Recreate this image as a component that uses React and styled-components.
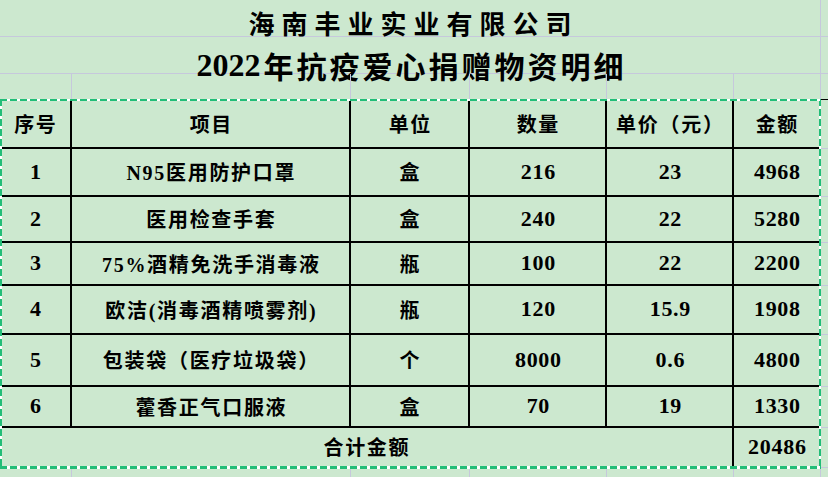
import React from 'react';
import styled, { createGlobalStyle } from 'styled-components';

const COLS = '72px 279px 119px 137px 127px 87px 1fr';
const GRID = '#c6c8dc';
const DASH = '#22bd77';

const GlobalStyle = createGlobalStyle`
  html, body {
    margin: 0;
    padding: 0;
    background: #cce8cf;
  }
  body {
    font-family: "Liberation Serif", "Noto Sans CJK SC", serif;
    color: #000;
  }
`;

const Sheet = styled.div`
  width: 828px;
  height: 477px;
  overflow: hidden;
  background: #cce8cf;
  display: flex;
  flex-direction: column;
`;

const TitleRow = styled.div`
  display: grid;
  grid-template-columns: 821px 1fr;
  height: ${({ h }) => h}px;
  box-sizing: border-box;
  border-bottom: 1px solid ${GRID};
`;

const TitleCell = styled.div`
  display: flex;
  align-items: center;
  justify-content: center;
  padding-top: ${({ pt }) => pt}px;
  padding-left: ${({ ls }) => ls}px;
  font-size: ${({ size }) => size}px;
  letter-spacing: ${({ ls }) => ls}px;
  font-weight: 700;
  border-right: 1px solid ${GRID};
  white-space: nowrap;
`;

const Year = styled.span`
  font-size: 32px;
  letter-spacing: 0;
  margin-right: 3px;
`;

const GridRow = styled.div`
  display: grid;
  grid-template-columns: ${COLS};
  height: ${({ h }) => h}px;
`;

const GridCell = styled.div`
  border-right: 1px solid ${GRID};
  &:last-child {
    border-right: none;
  }
`;

const Table = styled.div`
  position: relative;
  border-top: 1px solid #000;
  width: 828px;

  &::after {
    content: '';
    position: absolute;
    left: 0;
    top: -1px;
    width: 821px;
    bottom: -1px;
    pointer-events: none;
    background:
      repeating-linear-gradient(90deg, ${DASH} 0 7px, #fff 7px 10px) left top / 100% 2px no-repeat,
      repeating-linear-gradient(90deg, ${DASH} 0 7px, #fff 7px 10px) left bottom / 100% 3px no-repeat,
      repeating-linear-gradient(180deg, ${DASH} 0 7px, #fff 7px 10px) left top / 2px 100% no-repeat,
      repeating-linear-gradient(180deg, ${DASH} 0 7px, #fff 7px 10px) right top / 2px 100% no-repeat;
  }
`;

const Row = styled.div`
  display: grid;
  grid-template-columns: ${({ total }) => (total ? '734px 87px 1fr' : COLS)};
  height: ${({ h }) => h}px;
`;

const Cell = styled.div`
  display: flex;
  align-items: center;
  justify-content: center;
  box-sizing: border-box;
  border-right: 2px solid #000;
  border-bottom: 2px solid #000;
  font-size: ${({ num }) => (num ? '22px' : '20px')};
  font-weight: 700;
  letter-spacing: ${({ num }) => (num ? '0.7px' : '1.7px')};
  padding-left: 1.7px;
  white-space: nowrap;
`;

const Gutter = styled.div`
  border-bottom: 1px solid ${GRID};
`;

const header = ['序号', '项目', '单位', '数量', '单价（元）', '金额'];

const rows = [
  { h: 48, cells: ['1', 'N95医用防护口罩', '盒', '216', '23', '4968'] },
  { h: 46, cells: ['2', '医用检查手套', '盒', '240', '22', '5280'] },
  { h: 43, cells: ['3', '75%酒精免洗手消毒液', '瓶', '100', '22', '2200'] },
  { h: 49, cells: ['4', '欧洁(消毒酒精喷雾剂)', '瓶', '120', '15.9', '1908'] },
  { h: 52, cells: ['5', '包装袋（医疗垃圾袋）', '个', '8000', '0.6', '4800'] },
  { h: 41, cells: ['6', '藿香正气口服液', '盒', '70', '19', '1330'] },
];

const isNum = (t) => /^[\d.]+$/.test(t);

const App = () => {
  return (
    <Sheet>
      <GlobalStyle />
      <TitleRow h={37}>
        <TitleCell size={26} ls={7} pt={4}>
          海南丰业实业有限公司
        </TitleCell>
        <div />
      </TitleRow>
      <TitleRow h={37}>
        <TitleCell size={30} ls={3} pt={6}>
          <Year>2022</Year>年抗疫爱心捐赠物资明细
        </TitleCell>
        <div />
      </TitleRow>
      <GridRow h={27}>
        {[0, 1, 2, 3, 4, 5, 6].map((i) => (
          <GridCell key={i} />
        ))}
      </GridRow>

      <Table>
        <Row h={49}>
          {header.map((t) => (
            <Cell key={t}>{t}</Cell>
          ))}
          <Gutter />
        </Row>
        {rows.map((r) => (
          <Row key={r.cells[0]} h={r.h}>
            {r.cells.map((t, i) => (
              <Cell key={i} num={isNum(t)}>
                {t}
              </Cell>
            ))}
            <Gutter />
          </Row>
        ))}
        <Row h={40} total>
          <Cell>合计金额</Cell>
          <Cell num>20486</Cell>
          <Gutter />
        </Row>
      </Table>

      <GridRow h={10}>
        {[0, 1, 2, 3, 4, 5, 6].map((i) => (
          <GridCell key={i} />
        ))}
      </GridRow>
    </Sheet>
  );
};

export default App;
